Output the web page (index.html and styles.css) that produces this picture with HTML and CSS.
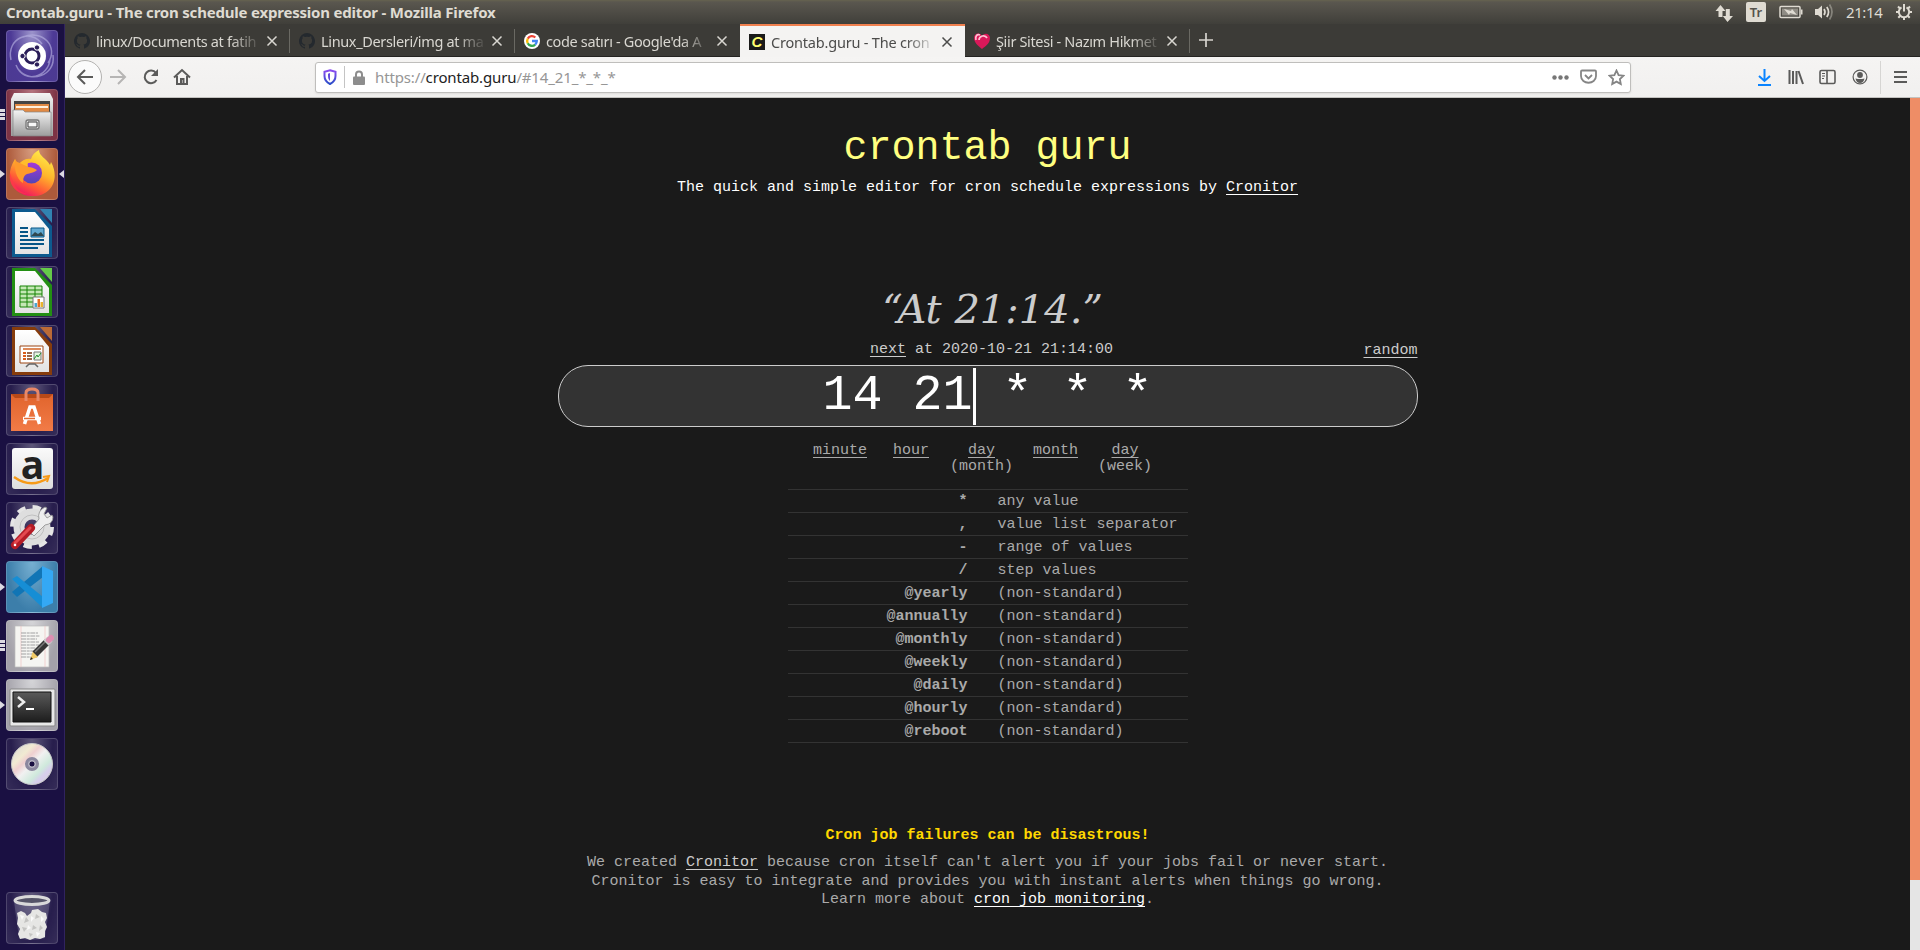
FILE: index.html
```html
<!DOCTYPE html>
<html lang="en">
<head>
<meta charset="utf-8">
<title>Crontab.guru - The cron schedule expression editor</title>
<link rel="stylesheet" href="styles.css">
</head>
<body>
<svg class="defs" width="0" height="0">
  <defs>
    <linearGradient id="steel" x2="0" y2="1"><stop stop-color="#f4f4f4"/><stop offset="1" stop-color="#9d9d9d"/></linearGradient>
    <linearGradient id="paper" x2="0" y2="1"><stop stop-color="#fff"/><stop offset="1" stop-color="#e3e3e3"/></linearGradient>
    <linearGradient id="flame" x1=".8" y1="0" x2=".3" y2="1"><stop stop-color="#fff14d"/><stop offset=".45" stop-color="#ffb52b"/><stop offset=".75" stop-color="#ff5a36"/><stop offset="1" stop-color="#ee1168"/></linearGradient>
    <linearGradient id="globe" x2="0" y2="1"><stop stop-color="#a439db"/><stop offset="1" stop-color="#5145b5"/></linearGradient>
    <linearGradient id="bag" x2="0" y2="1"><stop stop-color="#e0642c"/><stop offset="1" stop-color="#f27b47"/></linearGradient>
    <linearGradient id="shield" x2="0" y2="1"><stop stop-color="#8c4df0"/><stop offset="1" stop-color="#2a4ec8"/></linearGradient>
    <linearGradient id="screen" x2="0" y2="1"><stop stop-color="#5a5a5a"/><stop offset="1" stop-color="#1d1d1d"/></linearGradient>
    <linearGradient id="disc" x2="1" y2="1"><stop stop-color="#d7d7d7"/><stop offset=".28" stop-color="#f1ead2"/><stop offset=".38" stop-color="#efcfd0"/><stop offset=".5" stop-color="#f1f1f1"/><stop offset=".68" stop-color="#cfe9dc"/><stop offset=".78" stop-color="#d7cdec"/><stop offset="1" stop-color="#d4d4d4"/></linearGradient>
    <symbol id="github" viewBox="0 0 16 16"><path d="M8 0a8 8 0 0 0-2.5 15.6c.4.1.5-.2.5-.4v-1.5c-2.2.5-2.7-1-2.7-1-.4-.9-.9-1.2-.9-1.2-.7-.5.1-.5.1-.5.8.1 1.2.8 1.2.8.7 1.3 1.9.9 2.3.7.1-.5.3-.9.5-1.1-1.800-.2-3.600-.9-3.600-4 0-.9.3-1.600.8-2.100-.1-.2-.4-1 .1-2.100 0 0 .7-.2 2.200.8a7.500 7.500 0 0 1 4 0c1.500-1 2.200-.8 2.200-.8.4 1.100.2 1.900.1 2.100.5.600.8 1.300.8 2.100 0 3.100-1.900 3.700-3.700 3.900.3.300.6.800.6 1.500v2.400c0 .2.100.500.500.400A8 8 0 0 0 8 0z"/></symbol>
    <symbol id="close" viewBox="0 0 12 12"><path d="M1.500 1.500l9 9m0-9l-9 9" fill="none" stroke="currentColor" stroke-width="1.500"/></symbol>
  </defs>
</svg>

<header class="panel">
  <span class="panel-title">Crontab.guru - The cron schedule expression editor - Mozilla Firefox</span>
  <div class="indicators">
    <svg class="ind-net" width="18" height="18" viewBox="0 0 18 18"><path d="M5.500 1L10.500 7H7.500v6H3.500V7H.500zM12.500 18L7.800 12h3V5h4v7H18z"/></svg>
    <span class="ind-kbd">Tr</span>
    <svg class="ind-bat" width="24" height="14" viewBox="0 0 24 14"><rect x="1" y="1.500" width="20" height="11" rx="1" fill="none" stroke="#dfdbd2" stroke-width="1.500"/><path d="M3 3.500h16v7H3z" opacity=".45"/><path d="M22 4.500h1.500v5H22zM5 4l7 2 1-2 5 6-7-2-1 2z"/></svg>
    <svg class="ind-vol" width="20" height="18" viewBox="0 0 20 18"><path d="M1 6h3l4-3.500v13L4 12H1z"/><g fill="none" stroke="#dfdbd2" stroke-width="1.700"><path d="M10 6q2 3 0 6M12.800 4q3.500 5 0 10"/><path d="M15.500 1.500q5 7.500 0 15" opacity=".4"/></g></svg>
    <span class="clock">21:14</span>
    <svg class="ind-gear" width="16" height="16" viewBox="0 0 16 16"><g fill="none" stroke="#dfdbd2"><path d="M5.500 3.400a5.200 5.200 0 1 0 5 0" stroke-width="2"/><path d="M8 0v7.500" stroke-width="2"/><path d="M0 8h2.500m11 0H16M2 2.500l2 2M14 2.500l-2 2M2.300 13.700l1.700-1.700m9.700 1.700L12 12M8 13v3" stroke-width="2"/></g></svg>
  </div>
</header>

<div class="desktop">
<nav class="launcher">
  <div class="tile dash"><svg viewBox="0 0 52 52"><g fill="none" stroke="#b5afe0" opacity=".65"><path d="M5 30C0 8 25-2 36 14M17 7c20-8 36 10 25 26M47 25c3 22-24 28-34 15M10 35c8 20 33 12 34-6" stroke-width="1.500"/></g><circle cx="26" cy="26" r="14" fill="#fff"/><circle cx="26" cy="26" r="7" fill="none" stroke="#2a1d58" stroke-width="3"/><g fill="#2a1d58" stroke="#fff" stroke-width="1"><circle cx="16.500" cy="26" r="2.700"/><circle cx="31" cy="17.500" r="2.700"/><circle cx="31" cy="34.500" r="2.700"/></g></svg></div>
  <div class="tile files"><svg viewBox="0 0 52 52"><path d="M8 4h36l3 6v37H5V10z" fill="url(#steel)"/><path d="M8 12h36v12H8z" fill="#444"/><path d="M9 15h34v10H9z" fill="#e18a45"/><path d="M10 17h32v2H10z" fill="#fff0dd"/><path d="M7 21h10l2 2h26v24H7z" fill="url(#steel)" stroke="#858585" stroke-width=".7"/><rect x="20" y="31" width="13" height="9" rx="2" fill="#ddd" stroke="#777" stroke-width="1.300"/><path d="M22 33h9v5h-9z" fill="#f7f7f7" stroke="#444"/></svg><i class="pips"></i></div>
  <div class="tile firefox"><svg viewBox="0 0 52 52"><path d="M9 11c1 3 3 4 5 4 3-3 6-4 11-4 1-4 4-7 8-9 0 6 7 8 11 15l1-3c9 16 1 34-18 34C7 48-3 30 9 11z" fill="url(#flame)"/><circle cx="25.500" cy="25" r="10.500" fill="url(#globe)"/><path d="M9 11c1 3 3 4 5 4 3 0 5 2 8 4 3 0 6 1 9 3-3 3-7 3-10 4-4 2-4 6-4 9-7-4-9-15-8-24z" fill="#ff9a2c"/><path d="M14 15c4-4 8-5 11-4-3 2-4 5-3 8z" fill="#ffbd2b"/><path d="M4 25c3 9 5 18 17 21C10 46 2 36 4 25z" fill="#ff3b46" opacity=".7"/></svg><i class="arrow"></i><i class="arrow focus"></i></div>
  <div class="tile"><svg viewBox="0 0 52 52"><path d="M6 2h23l17 17v31H6z" fill="#0d5a8e"/><path d="M34 2h12v14z" fill="#3183b2"/><path d="M9 5h20l14 17v25H9z" fill="url(#paper)"/><path d="M14 21h8m-8 4h8m-8 4h8m-8 4h24m-24 4h24m-24 4h18" stroke="#075687" stroke-width="1.800"/><path d="M25 21h13v9H25z" fill="#62aad2" stroke="#075687"/><path d="M25 29l4-4 3 2 3-2 3 4z" fill="#304850"/></svg></div>
  <div class="tile"><svg viewBox="0 0 52 52"><path d="M6 2h23l17 17v31H6z" fill="#238f13"/><path d="M34 2h12v14z" fill="#65ca49"/><path d="M9 5h20l14 17v25H9z" fill="url(#paper)"/><path d="M14 20h22v21H14z" fill="#c5e8b5" stroke="#168305"/><path d="M14 24h22m-22 4h22m-22 4h22m-22 4h22M21 20v21m8-21v21" stroke="#168305"/><path d="M27 31h11v11H27z" fill="#fff" stroke="#777"/><path d="M28.500 37h2.500v4h-2.500z" fill="#4aa5d0"/><path d="M31.500 33h2.500v8h-2.500z" fill="#e66b20"/><path d="M34.500 36H37v5h-2.500z" fill="#e8b430"/></svg></div>
  <div class="tile"><svg viewBox="0 0 52 52"><path d="M6 2h23l17 17v31H6z" fill="#863c0c"/><path d="M34 2h12v14z" fill="#bb6a36"/><path d="M9 5h20l14 17v25H9z" fill="url(#paper)"/><path d="M14 21h23v17H14z" fill="#fff" stroke="#9b4513"/><path d="M17 24h18" stroke="#d56c30" stroke-width="1.600"/><path d="M17 28h3m-3 3h3m-3 3h3" stroke="#d95d1d" stroke-width="1.800"/><path d="M21 28h5m-5 3h5m-5 3h5" stroke="#773712" stroke-width="1.300"/><path d="M28 27h7v8h-7z" fill="#e3f5df" stroke="#777"/><path d="M28 34l3-4 1 2 3-4" fill="none" stroke="#21912b"/><path d="M23 39h6l3 3m-9-3l-3 3" fill="none" stroke="#666" stroke-width="1.500"/></svg></div>
  <div class="tile"><svg viewBox="0 0 52 52"><path d="M5 10h42v37H5z" fill="url(#bag)"/><path d="M5 10h42l-4 4H9z" fill="#b84918"/><path d="M20 17V9q0-4 6-4t6 4v8" fill="none" stroke="#e88867" stroke-width="3"/><path d="M18.500 40l5.500-17h4l5.500 17" fill="none" stroke="#fff" stroke-width="3.500"/><path d="M17 34.500h18" stroke="#fff" stroke-width="3.500"/><path d="M18 34.500h11" stroke="#e66d35" stroke-width="1.500"/></svg></div>
  <div class="tile amazon"><span>a</span><svg viewBox="0 0 52 52"><path d="M8 34q17 12 34 1" fill="none" stroke="#f69a18" stroke-width="2.400"/><path d="M37 34l6-1-2 6" fill="none" stroke="#f69a18" stroke-width="2"/></svg></div>
  <div class="tile"><svg viewBox="0 0 52 52"><circle cx="26" cy="25" r="19" fill="none" stroke="#e5e5e5" stroke-width="6" stroke-dasharray="8 6.920"/><circle cx="26" cy="25" r="13" fill="none" stroke="#dedede" stroke-width="11"/><circle cx="26" cy="25" r="12" fill="none" stroke="#c0c0c0"/><path d="M23 29l10-12q-2-8 6-12l2 1-3 6 3 4 5-3 1 2q0 7-8 8L28 34z" fill="#eee" stroke="#8d8d8d" stroke-width=".8"/><path d="M9 43l16-17" stroke="#b51c26" stroke-width="8" stroke-linecap="round"/><path d="M9 41l15-15" stroke="#e44950" stroke-width="3" stroke-linecap="round"/><circle cx="9" cy="43" r="1.300" fill="#fff"/></svg></div>
  <div class="tile code"><svg viewBox="0 0 52 52"><path d="M6 31l5 5L37 16V5z" fill="#1175b5"/><path d="M6 18l5-3 26 21v11z" fill="#168ed5"/><path d="M36 5l11 5v32l-11 5z" fill="#34a8f4"/></svg><i class="arrow"></i></div>
  <div class="tile gray"><svg viewBox="0 0 52 52"><path d="M9 6h34v41H9z" fill="#f5f5f2" stroke="#bbb" stroke-width=".7"/><path d="M15 6v41M39 6v41" stroke="#efb9b9" stroke-width=".6"/><path d="M15 13h17m-17 3h19m-19 3h16m-16 3h18m-18 3h18m-18 3h15m-15 3h15m-15 3h14m-14 3h16" stroke="#999" stroke-width=".9" stroke-dasharray="5 .7 3 .6"/><path d="M24 40l3-9 5 6z" fill="#f0ca65"/><path d="M24 40l1-3 2 2z" fill="#222"/><path d="M29 34l12-12" stroke="#353535" stroke-width="7"/><path d="M29 32l12-12" stroke="#777" stroke-width="1.500"/><path d="M40 23l4-4" stroke="#ccc" stroke-width="7"/><path d="M43 20l2-2" stroke="#de8eb2" stroke-width="6" stroke-linecap="round"/></svg><i class="pips"></i></div>
  <div class="tile gray"><svg viewBox="0 0 52 52"><rect x="4" y="10" width="45" height="37" rx="1" fill="#e8e8e8" stroke="#878787"/><path d="M7 13h38v30H7z" fill="url(#screen)" stroke="#111"/><path d="M12 18l6 5-6 5" fill="none" stroke="#eee" stroke-width="2.500"/><path d="M20 30h8" stroke="#fff" stroke-width="2"/></svg><i class="arrow"></i></div>
  <div class="tile"><svg viewBox="0 0 52 52"><circle cx="26" cy="26" r="20.500" fill="url(#disc)" stroke="#c9c9c9"/><circle cx="26" cy="26" r="5.500" fill="#aaa6ba" stroke="#8b879e" stroke-width="3"/><circle cx="26" cy="26" r="3" fill="#1a1042" stroke="#ddd" stroke-width=".7"/></svg></div>
  <div class="tile trash"><svg viewBox="0 0 52 52"><path d="M8 9l5 37q13 4 26 0l5-37z" fill="#b9b7cc" opacity=".25"/><path d="M11 21l4-2 4 2 2 3 4-3 1-3 6-1 4 3 4 1 1 5-2 4 2 5-2 4v6l-5 2-5-1-5 2-5-2-5 1-2-5 2-5-3-5 1-6z" fill="#e6e6e4"/><g fill="#c4c4c2"><path d="M20 25l3 4-5 2zM30 22l4 3-5 2zM16 35l5 1-3 4zM27 33l4 3-5 2zM34 33l3 3-4 3zM23 41l4 1-3 3z"/></g><g fill="#fafafa"><path d="M14 23l4 1-2 4zM25 24l3 2-3 4zM35 24l3 3-3 3zM22 33l3 3-4 2zM30 40l4 1-3 4z"/></g><ellipse cx="26" cy="8.500" rx="17" ry="4" fill="#555468" stroke="#d9d9d9" stroke-width="3"/></svg></div>
</nav>

<main class="browser">
  <div class="tabs">
    <div class="tab"><svg class="fav" fill="#24292e"><use href="#github"/></svg><span class="label">linux/Documents at fatih</span><svg class="x"><use href="#close"/></svg></div>
    <div class="tab"><svg class="fav" fill="#24292e"><use href="#github"/></svg><span class="label">Linux_Dersleri/img at ma</span><svg class="x"><use href="#close"/></svg></div>
    <div class="tab last"><svg class="fav" viewBox="0 0 16 16"><circle cx="8" cy="8" r="8" fill="#fff"/><g fill="none" stroke-width="2.300"><path d="M3.800 5.600A4.800 4.800 0 0 1 11.300 4.500" stroke="#ea4335"/><path d="M3.700 10.200a4.800 4.800 0 0 1 .1-4.600" stroke="#fbbc05"/><path d="M11.200 11.600a4.800 4.800 0 0 1-7.500-1.400" stroke="#34a853"/><path d="M8 8h4.800a4.800 4.800 0 0 1-1.600 3.600" stroke="#4285f4"/></g></svg><span class="label">code satırı - Google'da A</span><svg class="x"><use href="#close"/></svg></div>
    <div class="tab active"><span class="fav cfav">C</span><span class="label">Crontab.guru - The cron</span><svg class="x"><use href="#close"/></svg></div>
    <div class="tab"><svg class="fav" viewBox="0 0 16 16"><path d="M8 16C4 13 0 9 0 5c0-5 6-6 8-2 3-4 8-2 8 2 0 5-4 8-8 11z" fill="#d91859"/><path d="M2 7c-1-4 1-6 4-5M5 7c0-4 6-6 8-2" fill="none" stroke="#ffc0d2" stroke-width="1.700"/></svg><span class="label">Şiir Sitesi - Nazım Hikmet</span><svg class="x"><use href="#close"/></svg></div>
    <svg class="plus" width="14" height="14" viewBox="0 0 14 14"><path d="M7 0v14M0 7h14" stroke="#d6d4ce" stroke-width="1.700"/></svg>
  </div>

  <div class="toolbar">
    <span class="back"><svg width="18" height="18" viewBox="0 0 18 18"><path d="M17 9H2m7-7L2 9l7 7"/></svg></span>
    <svg class="fwd" width="18" height="18" viewBox="0 0 18 18"><path d="M1 9h15M9 2l7 7-7 7"/></svg>
    <svg class="reload" width="18" height="18" viewBox="0 0 18 18"><path d="M14 5A6.300 6.300 0 1 0 14.500 12"/><path d="M16 1v7H9z" fill="#5b5b5a" stroke="none"/></svg>
    <svg class="home" width="18" height="18" viewBox="0 0 18 18"><path d="M1 9.500L9 2l8 7.500M4 8v8h10V8"/><path d="M8 16v-5h2.500v5"/></svg>
    <div class="urlbar">
      <svg class="shield" width="14" height="16" viewBox="0 0 14 16"><path d="M7 1.200l5.500 1.500V7c0 4-2.500 6.500-5.500 8-3-1.500-5.500-4-5.500-8V2.700z" fill="none" stroke="url(#shield)" stroke-width="2"/><path d="M7 4l-2 .7V7c0 2.200.800 4 2 5z" fill="#6249dc" stroke="none"/></svg>
      <i class="split"></i>
      <svg class="lock" width="12" height="15" viewBox="0 0 12 15"><path d="M3 7V4.500a3 3 0 0 1 6 0V7" fill="none" stroke="#8d8d8d" stroke-width="2"/><rect y="6.500" width="12" height="8.500" rx="1" fill="#8d8d8d"/></svg>
      <span class="url">https://<b>crontab.guru</b>/#14_21_*_*_*</span>
      <svg class="dots" width="17" height="5" viewBox="0 0 17 5"><circle cx="2.500" cy="2.500" r="2.200"/><circle cx="8.500" cy="2.500" r="2.200"/><circle cx="14.500" cy="2.500" r="2.200"/></svg>
      <svg class="pocket" width="17" height="16" viewBox="0 0 17 16"><path d="M2 1.500h13q1 0 1 1V7c0 9-15 9-15 0V2.500q0-1 1-1z"/><path d="M5 6l3.500 3.500L12 6"/></svg>
      <svg class="star" width="17" height="17" viewBox="0 0 17 17"><path d="M8.500 1.500l2.100 4.600 4.900.6-3.600 3.400.9 5-4.300-2.500-4.300 2.500.9-5-3.600-3.400 4.900-.6z"/></svg>
    </div>
    <svg class="download" width="13" height="17" viewBox="0 0 13 17"><path d="M6.500 0v12M1 7l5.500 5L12 7M0 16h13"/></svg>
    <svg class="library" width="16" height="16" viewBox="0 0 16 16"><path d="M1.500 1v14M5 2v13M8.500 2v13M10.500 2L15 15"/></svg>
    <svg class="sidebar" width="17" height="16" viewBox="0 0 17 16"><rect x="1" y="1.500" width="15" height="13" rx="1.500"/><path d="M8 1.500v13"/><path d="M3 4.500h3M3 7h3M3 9.500h2" stroke-width="1"/></svg>
    <svg class="account" width="16" height="16" viewBox="0 0 16 16"><circle cx="8" cy="8" r="6.900" stroke-width="1.200"/><circle cx="8" cy="6" r="2.900" fill="#5b5b5a" stroke="none"/><path d="M3.500 9.500q4.500 1 9 0-1 4.500-4.500 4.500t-4.500-4.500z" fill="#5b5b5a" stroke="none"/></svg>
    <i class="rule"></i>
    <svg class="menu" width="13" height="14" viewBox="0 0 13 14"><path d="M0 2h13M0 7h13M0 12h13"/></svg>
  </div>

  <div class="view">
    <div class="page">
      <h1>crontab guru</h1>
      <p class="tagline">The quick and simple editor for cron schedule expressions by <a>Cronitor</a></p>
      <section class="editor">
        <p class="human">“At 21:14.”</p>
        <div class="next-row"><span class="next"><a>next</a> at 2020-10-21 21:14:00</span><a class="random">random</a></div>
        <div class="expr"><span>14 21<i class="caret"></i> * * *</span></div>
      </section>
      <div class="parts">
        <div class="p6"><a>minute</a></div><div class="p4"><a>hour</a></div><div class="p7"><a>day</a><br>(month)</div><div class="p5"><a>month</a></div><div class="pw"><a>day</a><br>(week)</div>
      </div>
      <table>
        <tr><th>*</th><td>any value</td></tr>
        <tr><th>,</th><td>value list separator</td></tr>
        <tr><th>-</th><td>range of values</td></tr>
        <tr><th>/</th><td>step values</td></tr>
        <tr><th>@yearly</th><td>(non-standard)</td></tr>
        <tr><th>@annually</th><td>(non-standard)</td></tr>
        <tr><th>@monthly</th><td>(non-standard)</td></tr>
        <tr><th>@weekly</th><td>(non-standard)</td></tr>
        <tr><th>@daily</th><td>(non-standard)</td></tr>
        <tr><th>@hourly</th><td>(non-standard)</td></tr>
        <tr><th>@reboot</th><td>(non-standard)</td></tr>
      </table>
      <p class="warn">Cron job failures can be disastrous!</p>
      <p class="about">We created <a class="soft">Cronitor</a> because cron itself can't alert you if your jobs fail or never start.<br>Cronitor is easy to integrate and provides you with instant alerts when things go wrong.<br>Learn more about <a class="bright">cron job monitoring</a>.</p>
    </div>
    <div class="scrollbar"><div class="thumb"></div></div>
  </div>
</main>
</div>
</body>
</html>
```
FILE: styles.css
```css
* { box-sizing: border-box; }
body { margin: 0; width: 1920px; height: 950px; overflow: hidden; background: #1a1a1a; font-family: "Noto Sans", sans-serif; display: flex; flex-direction: column; }
h1, p { margin: 0; font-weight: normal; }
svg { flex: none; display: block; }
.defs { position: absolute; }

/* Top panel */
.panel { height: 24px; flex: none; display: flex; justify-content: space-between; align-items: center; padding: 0 8px 0 6px; background: linear-gradient(#66634f 0, #5a574f 2px, #403f3a 100%); color: #dfdbd2; fill: #dfdbd2; }
.panel-title { font-size: 15px; font-weight: 700; line-height: 24px; letter-spacing: -.2px; white-space: nowrap; }
.indicators { display: flex; align-items: center; height: 24px; }
.ind-net { margin-right: 13px; margin-top: 1px; }
.ind-kbd { width: 20px; height: 20px; border-radius: 2px; background: #dfdbd2; color: #55524b; font-size: 13px; font-weight: 600; line-height: 21px; text-align: center; margin-right: 13px; }
.ind-bat { margin-right: 11px; }
.ind-vol { margin-right: 12px; }
.clock { font-size: 15px; width: 37px; margin-right: 13px; letter-spacing: -.4px; line-height: 24px; }

.desktop { display: flex; flex: 1; min-height: 0; }

/* Launcher */
.launcher { width: 65px; flex: none; background: #1a1042; border-right: 1px solid #30235e; padding: 6px 6px 6px; display: flex; flex-direction: column; gap: 7px; }
.tile { position: relative; width: 52px; height: 52px; flex: none; border-radius: 4px; border: 1px solid rgba(255,255,255,.16); background: radial-gradient(ellipse at 50% 0, rgba(255,255,255,.3), rgba(255,255,255,.06) 60%, rgba(255,255,255,.12)); }
.tile svg { width: 52px; height: 52px; margin: -1px; }
.dash { background: radial-gradient(ellipse at 50% 0, #9d95cc, #4d3a96 60%, #4c3a92); }
.files { background: radial-gradient(ellipse at 50% 0, #b5747e, #7d3345 70%); }
.firefox { background: radial-gradient(ellipse at 50% 0, #d69c7f, #ad5a3b 70%); }
.code { background: radial-gradient(ellipse at 50% 0, #77b0d2, #3c7eaa 70%); }
.gray { background: radial-gradient(ellipse at 50% 0, #d5d5d8, #a3a1a9 75%); }
.trash { margin-top: auto; }
.amazon svg { position: absolute; left: 0; top: 0; }
.amazon span { display: block; width: 41px; height: 41px; margin: 4px 5px; background: linear-gradient(#fafafa, #dedede); border-radius: 3px; color: #222; font: bold 39px/31px "Open Sans", sans-serif; text-align: center; }
.arrow { position: absolute; left: -7px; top: 21px; border: 4px solid transparent; border-left: 5px solid #dcdae2; border-right: 0; }
.arrow.focus { left: auto; right: -7px; border-left: 0; border-right: 5px solid #dcdae2; }
.pips { position: absolute; left: -7px; top: 19px; width: 5px; height: 12px; background: repeating-linear-gradient(#dcdae2 0 3px, transparent 3px 4px); }

/* Browser chrome */
.browser { flex: 1; min-width: 0; display: flex; flex-direction: column; }
.tabs { height: 33px; flex: none; background: #3c3b37; border-bottom: 1px solid #252422; display: flex; }
.tab { position: relative; width: 225px; padding: 2px 11px 0 9px; display: flex; align-items: center; color: #d9d7d1; }
.tab:not(.active):not(.last)::after { content: ""; position: absolute; right: 0; top: 5px; height: 24px; border-right: 1px solid #6a6963; }
.tab.active { height: 33px; background: #f4f3f2; border-top: 2px solid #f0804f; padding-top: 0; color: #4c4c4b; }
.fav { width: 16px; height: 16px; margin-right: 6px; }
.cfav { background: #1a1a1a; color: #ffff70; font: italic bold 15px/16px "Liberation Sans", sans-serif; text-align: center; }
.label { width: 168px; flex: none; white-space: nowrap; font-size: 14.500px; line-height: 22px; letter-spacing: -.35px; -webkit-mask-image: linear-gradient(90deg, #000 135px, transparent 166px); mask-image: linear-gradient(90deg, #000 135px, transparent 166px); }
.active .label { letter-spacing: -.2px; }
.x { width: 12px; height: 12px; margin-left: 2px; }
.plus { margin: 9px 0 0 9px; }

.toolbar { height: 41px; flex: none; background: linear-gradient(#f5f4f3, #f1f0ef); border-bottom: 1px solid #c2c1be; display: flex; align-items: center; padding: 0 13px 0 3px; fill: none; stroke: #5b5b5a; stroke-width: 2; }
.back { width: 34px; height: 34px; border: 1px solid #b3b2b0; border-radius: 50%; background: #fbfbfb; display: flex; align-items: center; justify-content: center; }
.fwd { stroke: #b6b5b4; margin-left: 7px; }
.reload { margin-left: 15px; }
.home { margin-left: 13px; }
.urlbar { width: 1316px; height: 31px; margin-left: 124px; border: 1px solid #bfbebc; border-radius: 3px; background: #fff; display: flex; align-items: center; box-shadow: 0 1px 2px #dddcda; stroke: #858585; stroke-width: 1.800; }
.shield { margin-left: 7px; }
.split { width: 1px; height: 22px; background: #c4c4c4; margin: 0 8px 0 7px; }
.lock { stroke: none; }
.url { flex: 1; margin-left: 10px; color: #969696; font-size: 15px; line-height: 24px; letter-spacing: -.14px; }
.url b { font-weight: normal; color: #222; }
.dots { fill: #777; stroke: none; }
.pocket { margin-left: 11px; }
.star { margin: 0 5px 0 11px; }
.download { stroke: #0a84ff; margin-left: 127px; }
.library { margin-left: 17px; }
.sidebar { margin-left: 15px; stroke-width: 1.600; }
.account { margin-left: 16px; }
.rule { width: 1px; height: 33px; background: #d6d5d3; margin-left: 12px; }
.menu { margin-left: auto; margin-right: 0; }

/* Page */
.view { flex: 1; min-height: 0; display: flex; background: #1a1a1a; }
.page { flex: 1; padding-top: 28px; font: 15px/18px "Liberation Mono", monospace; color: #aaa; text-align: center; }
a { text-decoration: underline 1px; text-underline-offset: 3px; }
h1 { font-size: 40px; line-height: 46px; color: #ffff80; }
.tagline { margin-top: 7px; color: #fff; }
.editor { width: 860px; margin: 87px auto 0; color: #ccc; }
.human { font: italic 40px/50px "DejaVu Serif", serif; padding-left: 10px; }
.next-row { display: grid; grid-template-columns: 1fr auto 1fr; margin-top: 7px; }
.next { grid-column: 2; padding-left: 8px; }
.random { justify-self: end; margin-top: 1px; }
.expr { height: 62px; margin-top: 5px; border: 1px solid #ccc; border-radius: 30px; background: #333; color: #fff; font-size: 50px; line-height: 60px; white-space: pre; }
.caret { display: inline-block; width: 3px; height: 57px; margin: 2px -3px 0 0; background: #fff; vertical-align: top; }
.parts { display: flex; justify-content: center; width: 400px; margin: 16px auto 0; line-height: 16px; padding-right: 10px; }
.p6 { width: 54px; margin-right: 26px; }
.p4 { width: 36px; margin-right: 21px; }
.p7 { width: 63px; margin-right: 20px; }
.p5 { width: 45px; margin-right: 20px; }
.pw { width: 54px; }
table { width: 400px; margin: 14px auto 0; border-collapse: collapse; border-top: 1px solid #333; }
tr { border-bottom: 1px solid #333; }
th, td { padding: 1px 0 0; height: 23px; line-height: 21px; }
th { width: 180px; text-align: right; }
td { padding-left: 30px; text-align: left; }
.warn { margin-top: 84px; color: #ffd800; font-weight: 700; }
.about { margin-top: 9px; line-height: 18.500px; }
.soft { color: #ccc; }
.bright { color: #fff; }
.scrollbar { width: 10px; background: #e5e5e5; }
.thumb { height: 782px; background: #ee8d66; }
```
